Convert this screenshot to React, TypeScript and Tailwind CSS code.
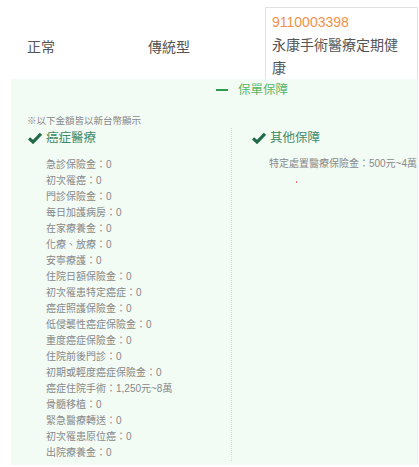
import React from "react";

const items = [
  "急診保險金：0",
  "初次罹癌：0",
  "門診保險金：0",
  "每日加護病房：0",
  "在家療養金：0",
  "化療、放療：0",
  "安寧療護：0",
  "住院日額保險金：0",
  "初次罹患特定癌症：0",
  "癌症照護保險金：0",
  "低侵襲性癌症保險金：0",
  "重度癌症保險金：0",
  "住院前後門診：0",
  "初期或輕度癌症保險金：0",
  "癌症住院手術：1,250元~8萬",
  "骨髓移植：0",
  "緊急醫療轉送：0",
  "初次罹患原位癌：0",
  "出院療養金：0",
];

function Check() {
  return (
    <svg width="14" height="12" viewBox="0 0 14 12" className="shrink-0">
      <path d="M1 6.3 L5 10 L13 1.8" fill="none" stroke="#1f6b47" strokeWidth="3.2" strokeLinejoin="miter" />
    </svg>
  );
}

export default function App() {
  return (
    <div
      className="w-[419px] h-[467px] bg-white overflow-hidden"
      style={{ fontFamily: '"Liberation Sans", "Noto Sans CJK TC", sans-serif' }}
    >
      <div className="flex h-[79px] text-[14px] text-[#555]">
        <div className="w-[148px] pl-[27px] pt-[37px] leading-[20px]">正常</div>
        <div className="w-[117px] pt-[37px] leading-[20px]">傳統型</div>
        <div className="mt-[7px] w-[153px] h-[72px] border-t border-l border-r border-[#e2e2e2] pl-[6px] pr-[6px] pt-[3px] leading-[23px] overflow-hidden">
          <div className="text-[#f5914a]">9110003398</div>
          <div>永康手術醫療定期健康</div>
        </div>
      </div>
      <div className="ml-[11px] w-[407px] h-[386px] bg-[#f3fbf5] border-r border-[#eef3ef]">
        <div className="h-[22px] flex items-center pl-[205px]">
          <div className="w-[12px] h-[2px] bg-[#2e9c4e] mr-[10px]" />
          <span className="text-[12.5px] text-[#5bb565] leading-[22px]">保單保障</span>
        </div>
        <div className="mt-[13px] pl-[16px] text-[9.5px] leading-[14px] text-[#888]">※以下金額皆以新台幣顯示</div>
        <div className="flex">
          <div className="w-[221px] pl-[17px]">
            <div className="flex items-center h-[20px]">
              <Check />
              <span className="ml-[4px] text-[12.5px] text-[#3b8a68]">癌症醫療</span>
            </div>
            <div className="mt-[9px] pl-[18px] text-[10px] leading-[16px] text-[#888]">
              {items.map((t) => (
                <div key={t}>{t}</div>
              ))}
            </div>
          </div>
          <div className="flex-1 border-l border-dotted border-[#d6dcd8] pl-[20px]">
            <div className="flex items-center h-[20px]">
              <Check />
              <span className="ml-[4px] text-[12.5px] text-[#3b8a68]">其他保障</span>
            </div>
            <div className="mt-[8px] pl-[17px] text-[10px] leading-[16px] text-[#888]">
              <div className="whitespace-nowrap">特定處置醫療保險金：500元~4萬</div>
              <div className="ml-[27px] mt-[9px] w-[1.5px] h-[1.5px] bg-[#e57373]" />
            </div>
          </div>
        </div>
      </div>
    </div>
  );
}
